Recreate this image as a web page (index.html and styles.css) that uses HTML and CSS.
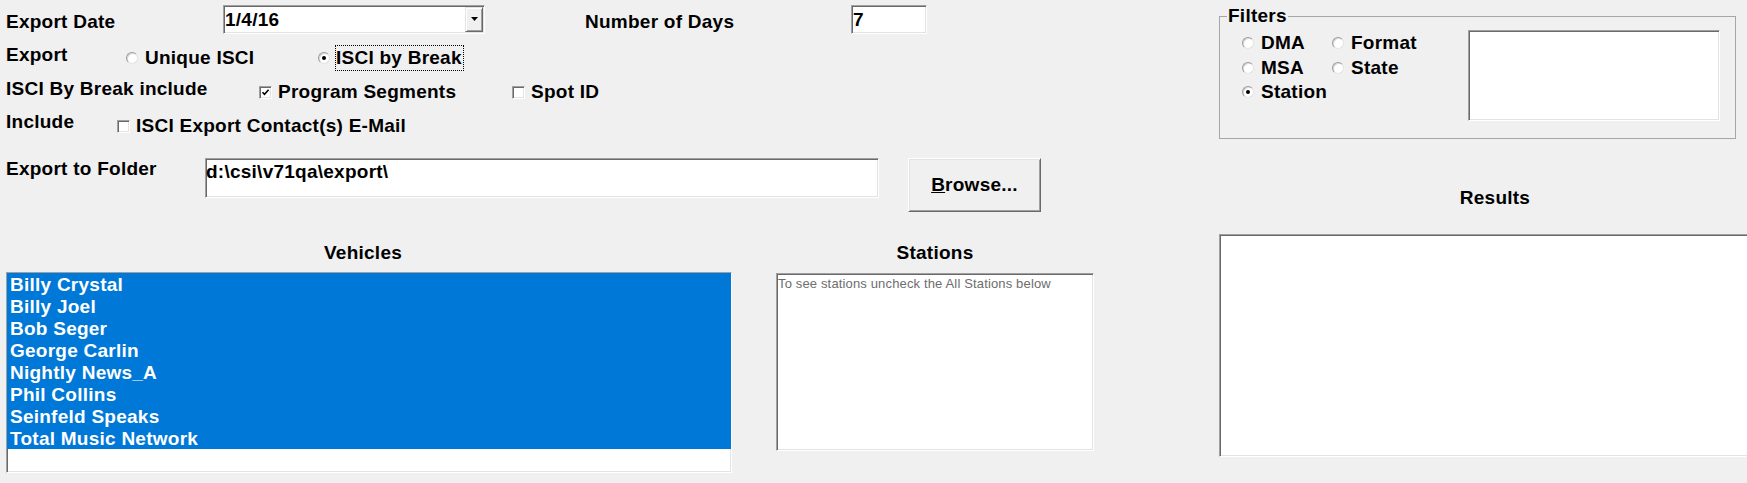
FILE: index.html
```html
<!DOCTYPE html>
<html lang="en">
<head>
<meta charset="utf-8">
<title>ISCI Export</title>
<link rel="stylesheet" href="styles.css">
</head>
<body>
<div class="form">
  <div class="left">
    <div class="row row-date">
      <span class="lbl w-date">Export Date</span>
      <div class="combo sunken">
        <span class="combo-text">1/4/16</span>
        <span class="combo-btn"><svg width="7" height="4" viewBox="0 0 7 4"><path d="M0 0H7L3.5 4Z" fill="#000"/></svg></span>
      </div>
      <span class="lbl w-days">Number of Days</span>
      <div class="field days sunken">7</div>
    </div>

    <div class="row row-export">
      <span class="lbl w-export">Export</span>
      <div class="opt w-unique"><span class="radio"></span><span class="opt-text">Unique ISCI</span></div>
      <div class="opt opt-focus"><span class="radio checked"></span><span class="opt-text focus">ISCI by Break</span></div>
    </div>

    <div class="row row-break">
      <span class="lbl w-break">ISCI By Break include</span>
      <div class="opt w-prog"><span class="check sunken-box"><svg width="9" height="9" viewBox="0 0 9 9"><path d="M1.5 4.2L3.5 6.4L7.6 1.8" fill="none" stroke="#000" stroke-width="1.6"/></svg></span><span class="opt-text">Program Segments</span></div>
      <div class="opt"><span class="check sunken-box"></span><span class="opt-text">Spot ID</span></div>
    </div>

    <div class="row row-include">
      <span class="lbl w-include">Include</span>
      <div class="opt"><span class="check sunken-box"></span><span class="opt-text">ISCI Export Contact(s) E-Mail</span></div>
    </div>

    <div class="row row-folder">
      <span class="lbl w-folder">Export to Folder</span>
      <div class="field folder sunken">d:\csi\v71qa\export\</div>
      <div class="button"><u>B</u>rowse...</div>
    </div>

    <div class="lists">
      <div class="col col-vehicles">
        <div class="title title-vehicles">Vehicles</div>
        <div class="listbox vehicles sunken">
          <div class="item">Billy Crystal</div>
          <div class="item">Billy Joel</div>
          <div class="item">Bob Seger</div>
          <div class="item">George Carlin</div>
          <div class="item">Nightly News_A</div>
          <div class="item">Phil Collins</div>
          <div class="item">Seinfeld Speaks</div>
          <div class="item">Total Music Network</div>
        </div>
      </div>
      <div class="col col-stations">
        <div class="title title-stations">Stations</div>
        <div class="listbox stations sunken">To see stations uncheck the All Stations below</div>
      </div>
    </div>
  </div>

  <div class="right">
    <fieldset class="filters">
      <legend>Filters</legend>
      <div class="filters-body">
        <div class="filter-grid">
          <div class="fopt"><span class="radio"></span><span class="opt-text">DMA</span></div>
          <div class="fopt"><span class="radio"></span><span class="opt-text">Format</span></div>
          <div class="fopt"><span class="radio"></span><span class="opt-text">MSA</span></div>
          <div class="fopt"><span class="radio"></span><span class="opt-text">State</span></div>
          <div class="fopt"><span class="radio checked"></span><span class="opt-text">Station</span></div>
        </div>
        <div class="filter-list sunken"></div>
      </div>
    </fieldset>
    <div class="title title-results">Results</div>
    <div class="results sunken"></div>
  </div>
</div>
</body>
</html>
```

FILE: styles.css
```css
html, body {
  margin: 0;
  padding: 0;
  background: #f0f0f0;
  overflow: hidden;
}

body {
  width: 1747px;
  height: 483px;
  font-family: "Liberation Sans", Arial, sans-serif;
  font-weight: bold;
  font-size: 19px;
  letter-spacing: 0.25px;
  line-height: 22px;
  color: #000;
}

.form {
  display: flex;
  align-items: flex-start;
}

.left {
  flex: none;
  width: 1219px;
}

.right {
  flex: none;
  width: 552px;
}

/* generic rows */
.row {
  display: flex;
  align-items: flex-start;
  box-sizing: border-box;
}

.lbl {
  flex: none;
  display: block;
  margin-left: 6px;
  white-space: nowrap;
}

/* sunken 3D field */
.sunken {
  box-sizing: border-box;
  background: #fff;
  border: 1px solid;
  border-color: #a0a0a0 #ffffff #ffffff #a0a0a0;
  box-shadow: inset 1px 1px 0 #696969, inset -1px -1px 0 #e3e3e3;
}

/* row 1 */
.row-date {
  height: 40px;
  padding-top: 5px;
}
.w-date {
  width: 217px;
  margin-top: 6px;
}
.combo {
  flex: none;
  width: 262px;
  height: 29px;
  padding: 1px;
  display: flex;
}
.combo-text {
  flex: 1;
  padding-top: 2px;
}
.combo-btn {
  flex: none;
  width: 18px;
  height: 25px;
  box-sizing: border-box;
  background: #f0f0f0;
  border: 1px solid;
  border-color: #e3e3e3 #696969 #696969 #e3e3e3;
  box-shadow: inset 1px 1px 0 #fff, inset -1px -1px 0 #a0a0a0;
  display: flex;
  align-items: center;
  justify-content: center;
}
.combo-btn svg {
  display: block;
  margin-top: -1px;
}
.w-days {
  margin-left: 100px;
  width: 266px;
  margin-top: 6px;
}
.field {
  flex: none;
  white-space: nowrap;
}
.days {
  width: 76px;
  height: 29px;
  padding: 3px 0 0 1px;
}

/* options */
.opt {
  flex: none;
  display: flex;
  align-items: center;
}
.opt-text {
  white-space: nowrap;
}
.radio {
  flex: none;
  width: 12px;
  height: 12px;
  box-sizing: border-box;
  border-radius: 50%;
  background: #fff;
  border: 1px solid;
  border-color: #9c9c9c #e3e3e3 #e3e3e3 #9c9c9c;
  box-shadow: inset 1px 1px 0 #d8d8d8;
  display: flex;
  align-items: center;
  justify-content: center;
}
.radio.checked::after {
  content: "";
  width: 4px;
  height: 4px;
  border-radius: 50%;
  background: #000;
}
.check {
  flex: none;
  width: 13px;
  height: 13px;
  display: flex;
  align-items: center;
  justify-content: center;
}
.sunken-box {
  box-sizing: border-box;
  background: #fff;
  border: 1px solid;
  border-color: #a0a0a0 #ffffff #ffffff #a0a0a0;
  box-shadow: inset 1px 1px 0 #696969, inset -1px -1px 0 #e3e3e3;
}
.check svg {
  display: block;
}

/* row 2 */
.row-export {
  height: 32px;
}
.w-export {
  width: 120px;
  margin-top: 4px;
}
.w-unique {
  width: 192px;
  margin-top: 7px;
}
.w-unique .opt-text {
  margin-left: 7px;
}
.opt-focus {
  margin-top: 5px;
}
.focus {
  margin-left: 5px;
  border: 1px dotted #000;
  padding: 1px 1px 1px 0;
}

/* row 3 */
.row-break {
  height: 34px;
}
.w-break {
  width: 253px;
  margin-top: 6px;
}
.row-break .opt {
  margin-top: 9px;
}
.row-break .opt-text,
.row-include .opt-text {
  margin-left: 6px;
}
.w-prog {
  width: 253px;
}

/* row 4 */
.row-include {
  height: 44px;
}
.w-include {
  width: 111px;
  margin-top: 5px;
}
.row-include .opt {
  margin-top: 9px;
}

/* row 5 */
.row-folder {
  height: 62px;
}
.w-folder {
  width: 199px;
  margin-top: 8px;
}
.folder {
  width: 674px;
  height: 40px;
  margin-top: 8px;
  padding: 2px 0 0 0;
}
.button {
  flex: none;
  box-sizing: border-box;
  width: 133px;
  height: 54px;
  margin-top: 8px;
  margin-left: 29px;
  background: #f0f0f0;
  border: 1px solid;
  border-color: #ffffff #696969 #696969 #ffffff;
  box-shadow: inset 1px 1px 0 #e3e3e3, inset -1px -1px 0 #a0a0a0;
  display: flex;
  align-items: center;
  justify-content: center;
  padding-bottom: 1px;
}

/* lists */
.lists {
  display: flex;
  align-items: flex-start;
  margin-top: 30px;
}
.col {
  flex: none;
}
.title {
  text-align: center;
  white-space: nowrap;
}
.col-vehicles {
  margin-left: 6px;
  width: 726px;
}
.title-vehicles {
  margin-bottom: 8px;
  padding-right: 12px;
}
.col-stations {
  margin-left: 44px;
  width: 318px;
}
.title-stations {
  margin-bottom: 9px;
}
.listbox {
  width: 100%;
}
.vehicles {
  height: 201px;
}
.item {
  height: 22px;
  padding-top: 1px;
  box-sizing: border-box;
  background: #0078d7;
  color: #fff;
  padding-left: 3px;
  white-space: nowrap;
}
.stations {
  height: 178px;
  padding: 2px 0 0 1px;
  font-weight: normal;
  font-size: 13px;
  letter-spacing: 0.15px;
  line-height: 15px;
  color: #6d6d6d;
}

/* right side */
.filters {
  margin: 5px 0 0 0;
  padding: 0;
  width: 517px;
  box-sizing: border-box;
  border: 1px solid #a6a6a6;
  min-width: 0;
}
.filters legend {
  margin-left: 7px;
  padding: 0 1px;
  line-height: 22px;
}
.filters-body {
  height: 111px;
  display: flex;
  align-items: flex-start;
}
.filter-grid {
  flex: none;
  margin-left: 22px;
  margin-top: 4px;
  display: grid;
  grid-template-columns: 90px auto;
  grid-auto-rows: 24.5px;
}
.fopt {
  display: flex;
  align-items: center;
  height: 22px;
  margin-top: 1px;
}
.fopt .opt-text {
  margin-left: 7px;
}
.filter-list {
  flex: none;
  width: 252px;
  height: 91px;
  margin-top: 3px;
  margin-left: auto;
  margin-right: 15px;
}
.title-results {
  margin-top: 48px;
}
.results {
  margin-top: 25px;
  width: 552px;
  height: 223px;
}
```
